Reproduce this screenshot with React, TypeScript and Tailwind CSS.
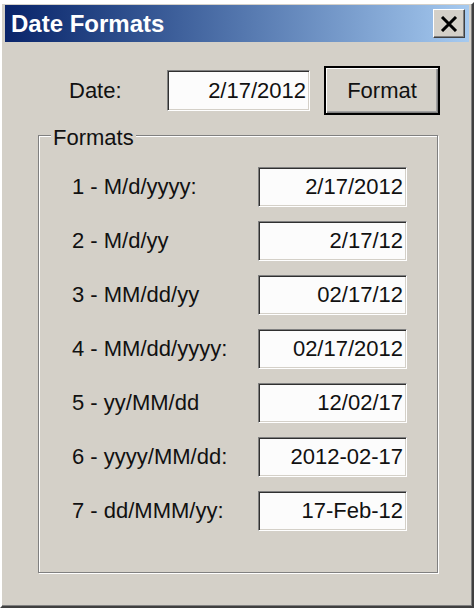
import React from 'react';

const formats = [
  { label: '1 - M/d/yyyy:', value: '2/17/2012' },
  { label: '2 - M/d/yy', value: '2/17/12' },
  { label: '3 - MM/dd/yy', value: '02/17/12' },
  { label: '4 - MM/dd/yyyy:', value: '02/17/2012' },
  { label: '5 - yy/MM/dd', value: '12/02/17' },
  { label: '6 - yyyy/MM/dd:', value: '2012-02-17' },
  { label: '7 - dd/MMM/yy:', value: '17-Feb-12' },
];

function TextBox({ value, className }: { value: string; className: string }) {
  return (
    <div
      className={`flex items-center justify-end pr-[3px] bg-[#fcfcfc] border border-t-[#808080] border-l-[#808080] border-r-white border-b-white shadow-[inset_1px_1px_0_#303030,inset_-1px_-1px_0_#d4d0c8] ${className}`}
    >
      {value}
    </div>
  );
}

export default function App() {
  return (
    <div className="w-[476px] h-[608px] bg-white overflow-hidden text-[22px] leading-[24px] text-[#111] font-['Liberation_Sans',Arial,sans-serif]">
      <div className="mt-[2px] w-[474px] h-[606px] bg-[#d4d0c8] border-2 border-t-white border-l-white border-r-[#404040] border-b-[#404040] shadow-[inset_-1px_-1px_0_#808080] px-[3px] pt-[1px]">
        {/* title bar */}
        <div className="h-[37px] flex items-center justify-between bg-gradient-to-r from-[#0a246a] to-[#a6caf0]">
          <span className="pl-[6px] text-white font-bold text-[24px]">Date Formats</span>
          <button className="mr-[4px] w-[32px] h-[29px] flex items-center justify-center bg-[#d4d0c8] border border-t-white border-l-white border-r-[#404040] border-b-[#404040] shadow-[inset_-1px_-1px_0_#808080]">
            <svg width="18" height="16" viewBox="0 0 18 16">
              <path d="M2 1 L16 15 M16 1 L2 15" stroke="#000" strokeWidth="3" />
            </svg>
          </button>
        </div>

        {/* date row */}
        <div className="mt-[24px] flex items-center pl-[64px]">
          <span className="w-[98px]">Date:</span>
          <TextBox value="2/17/2012" className="w-[143px] h-[41px]" />
          <button className="ml-[14px] w-[116px] h-[49px] bg-[#d4d0c8] border-2 border-black shadow-[inset_1px_1px_0_#fff,inset_-1px_-1px_0_#808080,inset_-2px_-2px_0_#a0a0a0]">
            Format
          </button>
        </div>

        {/* group box */}
        <div className="relative mt-[20px] ml-[33px] w-[400px] h-[438px] border border-[#808080] shadow-[inset_1px_1px_0_#fff,1px_1px_0_#fff] pt-[31px] pl-[33px]">
          <span className="absolute left-[12px] -top-[10px] px-[2px] bg-[#d4d0c8]">Formats</span>
          <div className="flex flex-col gap-[14px]">
            {formats.map(f => (
              <div key={f.label} className="flex items-center h-[40px]">
                <span className="w-[186px]">{f.label}</span>
                <TextBox value={f.value} className="w-[149px] h-[40px]" />
              </div>
            ))}
          </div>
        </div>
      </div>
    </div>
  );
}
